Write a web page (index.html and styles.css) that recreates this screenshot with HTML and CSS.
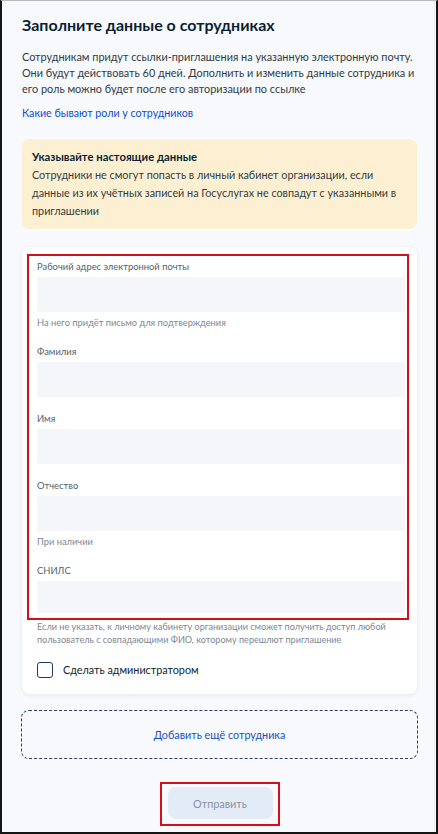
FILE: index.html
```html
<!DOCTYPE html>
<html lang="ru">
<head>
<meta charset="utf-8">
<title>Заполните данные о сотрудниках</title>
<link rel="stylesheet" href="styles.css">
</head>
<body>
<div class="frame">
  <div class="page">
    <h1 class="title">Заполните данные о сотрудниках</h1>
    <p class="intro">Сотрудникам придут ссылки-приглашения на указанную электронную почту. Они будут действовать 60 дней. Дополнить и изменить данные сотрудника и его роль можно будет после его авторизации по ссылке</p>
    <a class="link" href="#">Какие бывают роли у сотрудников</a>

    <div class="warning">
      <div class="warning-title">Указывайте настоящие данные</div>
      <div class="warning-text">Сотрудники не смогут попасть в личный кабинет организации, если данные из их учётных записей на Госуслугах не совпадут с указанными в приглашении</div>
    </div>

    <div class="card">
      <div class="highlight">
        <div class="field">
          <div class="label">Рабочий адрес электронной почты</div>
          <div class="input"></div>
          <div class="help">На него придёт письмо для подтверждения</div>
        </div>
        <div class="field">
          <div class="label">Фамилия</div>
          <div class="input"></div>
        </div>
        <div class="field">
          <div class="label">Имя</div>
          <div class="input"></div>
        </div>
        <div class="field">
          <div class="label">Отчество</div>
          <div class="input"></div>
          <div class="help">При наличии</div>
        </div>
        <div class="field last">
          <div class="label">СНИЛС</div>
          <div class="input short"></div>
        </div>
      </div>
      <div class="note">Если не указать, к личному кабинету организации сможет получить доступ любой пользователь с совпадающими ФИО, которому перешлют приглашение</div>
      <label class="check">
        <span class="box"></span>
        <span class="check-text">Сделать администратором</span>
      </label>
    </div>

    <div class="add">Добавить ещё сотрудника</div>

    <div class="submit-row">
      <div class="submit-mark">
        <div class="submit">Отправить</div>
      </div>
    </div>
  </div>
</div>
</body>
</html>
```

FILE: styles.css
```css
html, body {
  margin: 0;
  padding: 0;
}
body {
  font-family: Lato, "Noto Sans", sans-serif;
  background: #ffffff;
}
.frame {
  width: 438px;
  height: 834px;
  box-sizing: border-box;
  border: 2px solid #151515;
  border-top: 1px solid #b9b9b9;
  overflow: hidden;
  background: #f7f9fc;
}
.page {
  height: 100%;
  box-sizing: border-box;
  padding: 12px 17px 0 20px;
  border-right: 1px solid #e9ecf1;
  margin-right: 1px;
}
.title {
  margin: 0;
  font-size: 16px;
  line-height: 24px;
  font-weight: 700;
  color: #0b1f33;
}
.intro {
  margin: 12px 0 0;
  font-size: 10.9px;
  line-height: 16px;
  color: #333b44;
}
.link {
  display: block;
  margin-top: 8px;
  font-size: 10.7px;
  line-height: 16px;
  color: #0d4cd3;
  text-decoration: none;
}
.warning {
  margin-top: 18px;
  background: #fdf0d2;
  border-radius: 8px;
  padding: 9px 14px 9px 10px;
}
.warning-title {
  font-size: 11.3px;
  line-height: 18px;
  font-weight: 700;
  color: #0b1f33;
}
.warning-text {
  font-size: 10.8px;
  line-height: 18px;
  color: #333b44;
}
.card {
  margin-top: 18px;
  background: #ffffff;
  border-radius: 8px;
  box-shadow: 0 1px 4px rgba(11, 31, 51, 0.08);
  padding: 7px 8px 16px 5px;
}
.highlight {
  border: 2px solid #d2101c;
  padding: 4px 2px 5px 8px;
}
.field {
  margin-bottom: 15px;
}
.field.last {
  margin-bottom: 0;
}
.label {
  font-size: 9.4px;
  line-height: 14px;
  color: #535f6b;
  margin-bottom: 3px;
}
.input {
  height: 35px;
  background: #f4f6f9;
  border-radius: 2px;
}
.input.short {
  height: 32px;
}
.help {
  margin-top: 4px;
  font-size: 9.3px;
  line-height: 14px;
  color: #7d8894;
}
.note {
  margin: 0 0 0 10px;
  font-size: 9.1px;
  line-height: 13px;
  color: #7d8894;
}
.check {
  display: flex;
  align-items: center;
  gap: 10px;
  margin: 16px 0 0 10px;
}
.box {
  width: 16px;
  height: 16px;
  box-sizing: border-box;
  border: 1.5px solid #1f3767;
  border-radius: 3px;
  background: #ffffff;
}
.check-text {
  font-size: 10.8px;
  line-height: 16px;
  color: #0b1f33;
}
.add {
  margin-top: 16px;
  height: 49px;
  box-sizing: border-box;
  border: 1px dashed #2b3f66;
  border-radius: 8px;
  display: flex;
  align-items: center;
  justify-content: center;
  font-size: 10.8px;
  color: #1a4fc4;
  margin-left: -1px;
  margin-right: -1px;
}
.submit-row {
  display: flex;
  justify-content: center;
  margin-top: 23px;
}
.submit-mark {
  border: 2px solid #d2101c;
  padding: 3px 5px 5px 6px;
}
.submit {
  width: 105px;
  height: 32px;
  border-radius: 8px;
  background: #e3ebf6;
  color: #8593a6;
  font-size: 10.8px;
  display: flex;
  align-items: center;
  justify-content: center;
}
```
